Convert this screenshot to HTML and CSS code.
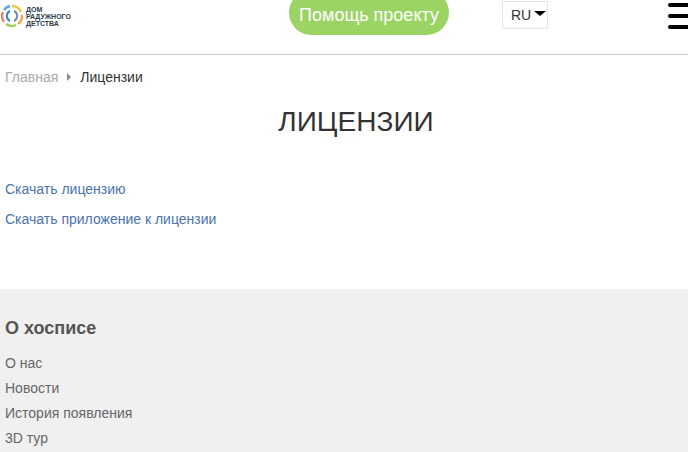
FILE: index.html
```html
<!DOCTYPE html>
<html lang="ru">
<head>
    <meta charset="UTF-8">
    <meta name="viewport" content="width=device-width, initial-scale=1.0">
    <title>Лицензии</title>
    <link rel="stylesheet" href="styles.css">
</head>
<body>
    <header class="header">
        <a class="logo" href="#">
            <svg class="logo-mark" width="22" height="24" viewBox="0 0 22 24" fill="none">
                <path d="M11 2 A10 10 0 0 1 20 8" stroke="#f5c342" stroke-width="2.4"/>
                <path d="M21 11 A10 10 0 0 1 17 20" stroke="#f2a33a" stroke-width="2.4"/>
                <path d="M15 21 A10 10 0 0 1 5 20" stroke="#9ccf5f" stroke-width="2.4"/>
                <path d="M3 18 A10 10 0 0 1 2 8" stroke="#ef7f6a" stroke-width="2.4"/>
                <path d="M3 6 A10 10 0 0 1 9 2" stroke="#5aa9d6" stroke-width="2.4"/>
                <path d="M9 7 A5.5 5.5 0 0 0 9 17" stroke="#3f86c4" stroke-width="2"/>
                <path d="M13 7 A5.5 5.5 0 0 1 13 17" stroke="#7a8fa8" stroke-width="2"/>
            </svg>
            <span class="logo-text">ДОМ<br>РАДУЖНОГО<br>ДЕТСТВА</span>
        </a>
        <a class="help-btn" href="#">Помощь проекту</a>
        <div class="lang">RU<span class="lang-arrow"></span></div>
        <div class="burger"><span></span><span></span><span></span></div>
    </header>

    <nav class="crumbs">
        <a href="#">Главная</a>
        <span class="crumbs-sep"></span>
        <span class="crumbs-current">Лицензии</span>
    </nav>

    <main class="content">
        <h1>ЛИЦЕНЗИИ</h1>
        <p><a href="#">Скачать лицензию</a></p>
        <p><a href="#">Скачать приложение к лицензии</a></p>
    </main>

    <footer class="footer">
        <h3>О хосписе</h3>
        <ul>
            <li><a href="#">О нас</a></li>
            <li><a href="#">Новости</a></li>
            <li><a href="#">История появления</a></li>
            <li><a href="#">3D тур</a></li>
        </ul>
    </footer>
</body>
</html>
```
FILE: styles.css
```css
html, body {
    height: 452px;
    overflow: hidden;
}
body {
    font-family: "Liberation Sans", Arial, sans-serif;
    font-size: 14px;
    background-color: #fff;
    color: #333;
    margin: 0;
}
a {
    text-decoration: none;
}
.header {
    display: flex;
    align-items: flex-start;
    height: 54px;
    border-bottom: 1px solid #ccc;
    overflow: hidden;
}
.logo {
    display: flex;
    align-items: center;
    gap: 3px;
    width: 289px;
    padding: 4px 0 0 1px;
    box-sizing: border-box;
}
.logo-text {
    font-size: 7px;
    line-height: 7px;
    font-weight: bold;
    color: #2d3a4a;
}
.help-btn {
    width: 160px;
    height: 45px;
    margin-top: -10px;
    padding-top: 9px;
    box-sizing: border-box;
    background-color: #9bd465;
    border-radius: 23px;
    color: #fff;
    font-size: 18px;
    line-height: 33px;
    text-align: center;
}
.lang {
    display: flex;
    align-items: center;
    width: 46px;
    height: 28px;
    margin: 1px 0 0 53px;
    padding-left: 8px;
    box-sizing: border-box;
    border: 1px solid #e6e6e6;
    color: #333;
    font-size: 14px;
}
.lang-arrow {
    margin: -4px 0 0 3px;
    border-top: 5px solid #000;
    border-left: 6px solid transparent;
    border-right: 6px solid transparent;
}
.burger {
    display: flex;
    flex-direction: column;
    gap: 7px;
    width: 20px;
    margin: 3px 0 0 120px;
}
.burger span {
    height: 4px;
    background-color: #000;
    border-radius: 2px 0 0 2px;
}
.crumbs {
    display: flex;
    align-items: center;
    padding: 14px 5px 0;
    line-height: 16px;
}
.crumbs a {
    color: #aaa;
}
.crumbs-sep {
    margin: 0 9px;
    border-left: 4px solid #888;
    border-top: 4px solid transparent;
    border-bottom: 4px solid transparent;
}
.crumbs-current {
    color: #333;
}
.content {
    height: 204px;
    padding: 0 5px;
}
.content h1 {
    margin: 0;
    padding: 21px 0 0 24px;
    font-size: 28px;
    font-weight: normal;
    line-height: 32px;
    text-align: center;
    color: #333;
}
.content p {
    margin: 0 0 14px;
    line-height: 16px;
}
.content h1 + p {
    margin-top: 43px;
}
.content a {
    color: #4a72b0;
}
.footer {
    padding: 29px 5px 0;
    background-color: #f0f0f0;
    height: 163px;
    box-sizing: border-box;
}
.footer h3 {
    margin: 0 0 13px;
    font-size: 18px;
    line-height: 20px;
    color: #555;
}
.footer ul {
    margin: 0;
    padding: 0;
    list-style: none;
}
.footer li {
    line-height: 25px;
}
.footer a {
    color: #666;
}
```
